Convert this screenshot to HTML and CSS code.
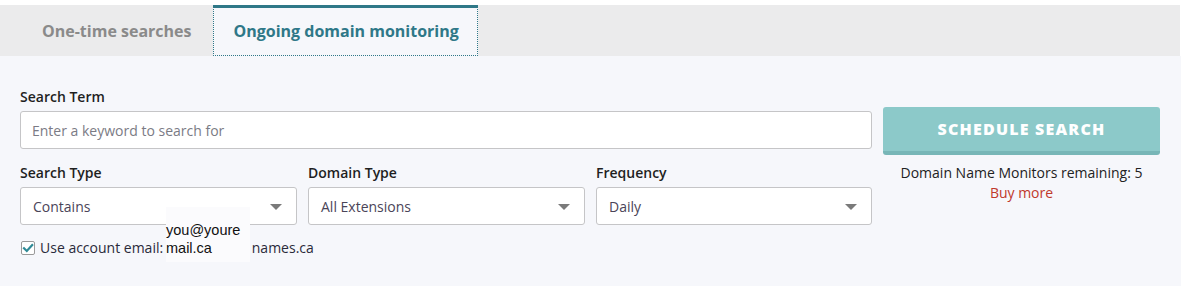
FILE: index.html
```html
<!DOCTYPE html>
<html>
<head>
<meta charset="utf-8">
<link rel="stylesheet" href="styles.css">
</head>
<body>
<div class="page">
  <div class="tabs">
    <div class="tab">One-time searches</div>
    <div class="tab active">Ongoing domain monitoring</div>
  </div>
  <div class="panel">
    <div class="left">
      <label class="lbl">Search Term</label>
      <div class="input placeholder">Enter a keyword to search for</div>
      <div class="row3">
        <div class="field">
          <label class="lbl">Search Type</label>
          <div class="input select">Contains<span class="caret"></span></div>
        </div>
        <div class="field">
          <label class="lbl">Domain Type</label>
          <div class="input select">All Extensions<span class="caret"></span></div>
        </div>
        <div class="field">
          <label class="lbl">Frequency</label>
          <div class="input select">Daily<span class="caret"></span></div>
        </div>
      </div>
      <div class="check-row">
        <span class="checkbox"><svg width="12" height="12" viewBox="0 0 12 12"><path d="M2 6.2 L4.8 9 L10.2 3" fill="none" stroke="#2f8a96" stroke-width="2.2" stroke-linecap="square"/></svg></span>
        <span class="check-text">Use account email: <span class="hidden-email">you@yourdomain</span>names.ca</span>
      </div>
      <div class="mask">you@youre<br>mail.ca</div>
    </div>
    <div class="right">
      <button class="btn">SCHEDULE SEARCH</button>
      <div class="remaining">Domain Name Monitors remaining: 5</div>
      <a class="buy">Buy more</a>
    </div>
  </div>
</div>
</body>
</html>
```
FILE: styles.css
```css
* { box-sizing: border-box; }
html, body { margin: 0; padding: 0; background: #ffffff; }
body { font-family: "Open Sans", "Noto Sans", sans-serif; color: #222; }
.page { padding-top: 5px; width: 1181px; }
.tabs {
  display: flex;
  height: 51px;
  background: #ebebec;
  padding-left: 22px;
  gap: 2px;
  margin-right: 1px;
}
.tab {
  padding: 0 20px;
  font-size: 16px;
  font-weight: 700;
  color: #8a8a8a;
  display: flex;
  align-items: center;
  height: 51px;
  padding-top: 1px;
}
.active {
  background: #f6f7fb;
  color: #2f7888;
  border-top: 3px solid #2f7888;
  outline: 1px dotted #2f7888;
  outline-offset: -1px;
  padding-top: 0;
  padding-right: 19px;
  height: 51px;
  padding-bottom: 2px;
}
.panel {
  background: #f6f7fb;
  height: 230px;
  display: flex;
  gap: 11px;
  padding: 31px 20px 0 20px;
}
.left { width: 852px; position: relative; }
.right { width: 277px; padding-top: 20px; display: flex; flex-direction: column; align-items: center; }
.lbl {
  display: block;
  font-size: 14px;
  font-weight: 600;
  line-height: 20px;
  color: #1f1f1f;
  margin-bottom: 4px;
}
.input {
  height: 38px;
  background: #fff;
  border: 1px solid #c5c5c7;
  border-radius: 3px;
  font-size: 14px;
  line-height: 36px;
  padding: 1px 12px 0 12px;
  color: #4a4458;
  position: relative;
}
.placeholder { color: #7b7b85; padding-left: 11px; }
.row3 {
  display: grid;
  grid-template-columns: 277px 277px 276px;
  gap: 11px;
  margin-top: 14px;
}
.caret {
  position: absolute;
  right: 14px;
  top: 16px;
  width: 0; height: 0;
  border-left: 6px solid transparent;
  border-right: 6px solid transparent;
  border-top: 6px solid #7a7a7a;
}
.check-row {
  margin-top: 13px;
  height: 20px;
  display: flex;
  align-items: center;
  gap: 5px;
  padding-left: 1px;
}
.checkbox {
  width: 14px; height: 14px;
  background: #fff;
  border: 1px solid #9a9a9a;
  border-radius: 2px;
  display: flex; align-items: center; justify-content: center;
}
.check-text { font-size: 14px; color: #2a2a3a; line-height: 20px; }
.hidden-email { visibility: hidden; display: inline-block; width: 85px; overflow: hidden; white-space: nowrap; vertical-align: top; }
.mask {
  position: absolute;
  left: 146px;
  top: 120px;
  width: 84px;
  height: 55px;
  background: #fbfbfd;
  font-family: "Liberation Sans", Arial, sans-serif;
  font-size: 14.5px;
  line-height: 18px;
  color: #111;
  padding-top: 14px;
}
.btn {
  width: 277px;
  height: 48px;
  border: none;
  border-bottom: 4px solid #78b6b7;
  border-radius: 3px;
  background: #8cc9c9;
  color: #fff;
  font-family: "Open Sans", sans-serif;
  font-weight: 800;
  font-size: 16px;
  letter-spacing: 1.2px;
  padding: 0;
}
.remaining { margin-top: 8px; font-size: 14px; line-height: 20px; color: #222; }
.buy { font-size: 14px; line-height: 19px; color: #c0392b; }
```
